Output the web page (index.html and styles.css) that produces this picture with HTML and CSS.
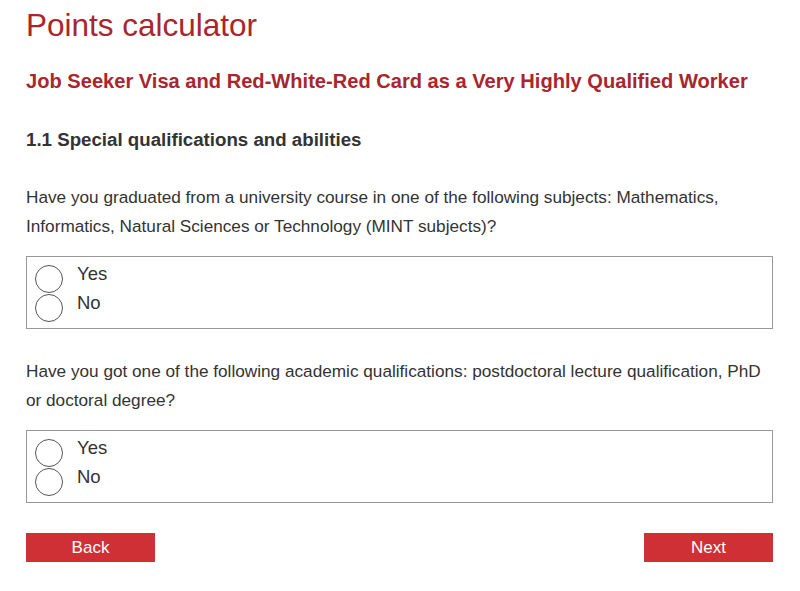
FILE: index.html
```html
<!DOCTYPE html>
<html>
<head>
<meta charset="utf-8">
<link rel="stylesheet" href="styles.css">
</head>
<body>
<div class="page">
  <h1 class="title">Points calculator</h1>
  <h2 class="subtitle">Job Seeker Visa and Red-White-Red Card as a Very Highly Qualified Worker</h2>
  <h3 class="section">1.1 Special qualifications and abilities</h3>
  <p class="question">Have you graduated from a university course in one of the following subjects: Mathematics, Informatics, Natural Sciences or Technology (MINT subjects)?</p>
  <div class="options">
    <label class="option"><span class="radio"></span><span class="label">Yes</span></label>
    <label class="option"><span class="radio"></span><span class="label">No</span></label>
  </div>
  <p class="question q2">Have you got one of the following academic qualifications: postdoctoral lecture qualification, PhD or doctoral degree?</p>
  <div class="options">
    <label class="option"><span class="radio"></span><span class="label">Yes</span></label>
    <label class="option"><span class="radio"></span><span class="label">No</span></label>
  </div>
  <div class="buttons">
    <button class="btn">Back</button>
    <button class="btn">Next</button>
  </div>
</div>
</body>
</html>
```
FILE: styles.css
```css
html, body { margin: 0; padding: 0; background: #fff; }
body { font-family: "Liberation Sans", Arial, sans-serif; color: #333; }
.page { padding: 0 27px 0 26px; }
.title { font-size: 31.5px; font-weight: normal; color: #a8262c; margin: 0; padding-top: 7px; line-height: 36px; }
.subtitle { font-size: 20.1px; font-weight: bold; color: #a8262c; margin: 25px 0 0; line-height: 26px; }
.section { font-size: 18.7px; font-weight: bold; color: #333; margin: 34px 0 0; line-height: 24px; }
.question { font-size: 17.2px; line-height: 29px; margin: 31px 0 0; color: #333; }
.q2 { margin-top: 28px; }
.options { border: 1px solid #999; margin-top: 15px; padding: 2px 8px 11px 8px; display: flex; flex-direction: column; }
.option { display: flex; align-items: center; height: 29px; }
.radio { border: 1.5px solid #555; border-radius: 50%; box-sizing: border-box; width: 28px; height: 28px; margin-top: 10px; flex: none; }
.label { font-size: 18.5px; color: #333; margin-left: 14px; }
.buttons { display: flex; justify-content: space-between; margin-top: 30px; }
.btn { width: 129px; height: 29px; background: #cf3036; color: #fff; border: none; border-radius: 0; font-family: "Liberation Sans", Arial, sans-serif; font-size: 17px; padding: 0; }
```
